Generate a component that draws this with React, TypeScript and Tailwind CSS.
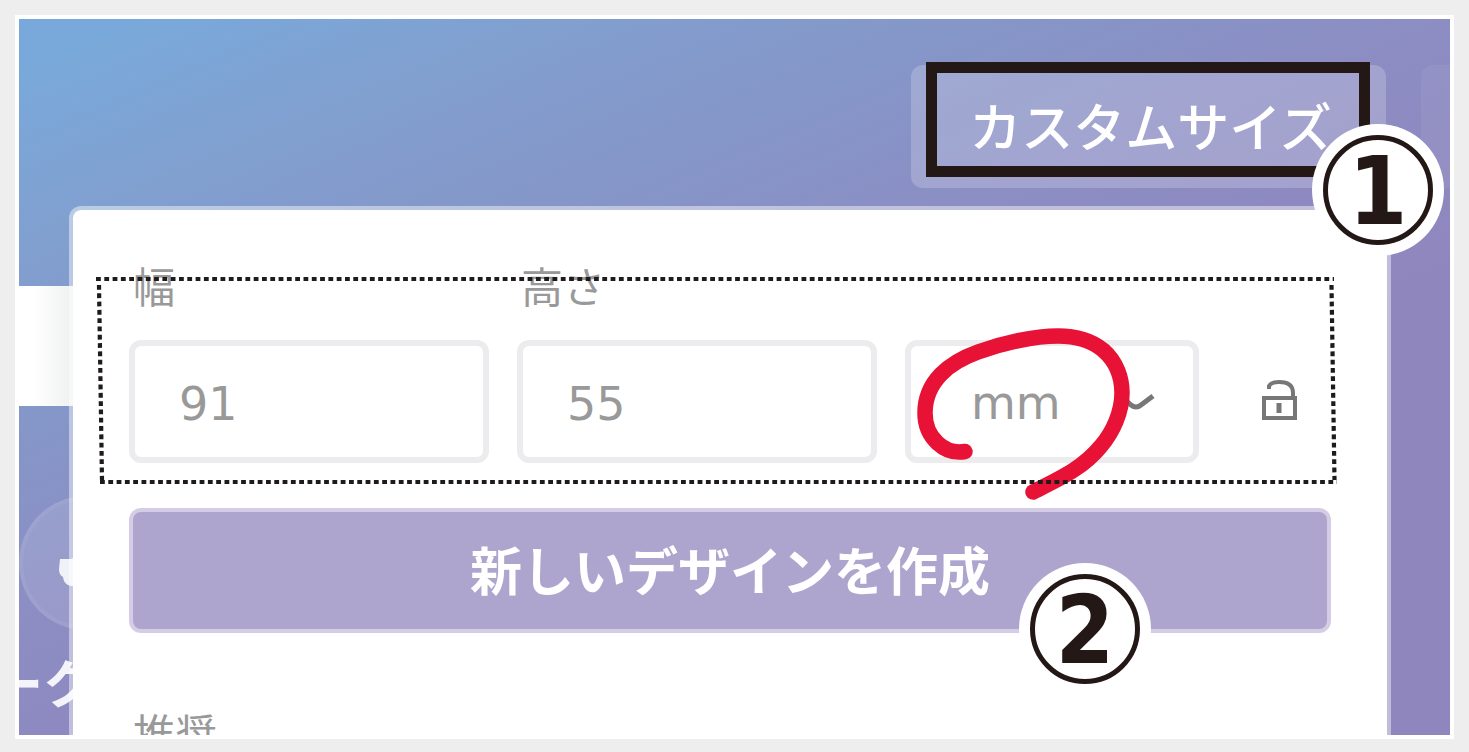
import { useState } from "react";

const fontStack = "font-['DejaVu_Sans','Noto_Sans_CJK_JP',sans-serif]";
const fieldBox =
  "h-[123px] w-full min-w-0 appearance-none rounded-xl border-[6px] border-[#ececef] bg-white pt-1 text-[46px] text-[#999] outline-none";

function StepBadge({ step }: { step: string }) {
  return (
    <span className="flex size-33 items-center justify-center rounded-full bg-white">
      <span className="flex size-[110px] items-center justify-center rounded-full border-[5px] border-[#231815] pt-1 font-['DejaVu_Sans_Condensed','DejaVu_Sans',sans-serif] text-[94px] leading-[100px] font-bold text-[#231815]">
        {step}
      </span>
    </span>
  );
}

function Backdrop() {
  return (
    <div className="absolute inset-y-0 left-0 flex w-[200px] flex-col overflow-hidden" aria-hidden="true">
      <div className="h-[267px] shrink-0" />
      <div className="h-30 shrink-0 bg-white">
        <div className="h-full w-[54px] bg-linear-to-r from-white from-25% to-[#eff1f0]" />
      </div>
      <div className="mt-[90px] flex size-[134px] shrink-0 items-center rounded-full border-4 border-white/5 bg-white/12 pl-8">
        <svg className="mt-5 h-8 w-10" viewBox="0 0 40 32">
          <path d="M5 2H16L20 0H40V29H16Q9 28 8 20Q4 18 4 12Z" fill="#f1f2f8" />
        </svg>
      </div>
      <p className="mt-6 -ml-7 text-[52px] leading-[64px] font-bold whitespace-nowrap text-white/90">
        ーク
      </p>
    </div>
  );
}

function UnlockIcon() {
  return (
    <svg className="h-11 w-10" viewBox="0 0 40 44" fill="none" stroke="#777" strokeWidth="4">
      <path d="M5 18H36V38H5Z" />
      <path d="M10 9V6Q12 2 20 2Q34 2 34 13V19" />
      <path d="M20 23V33" strokeWidth="5" />
    </svg>
  );
}

export default function App() {
  const [width, setWidth] = useState("91");
  const [height, setHeight] = useState("55");

  return (
    <div className={`flex h-screen bg-[#eee] pt-[15px] pr-[15px] pb-[13px] pl-[15px] ${fontStack}`}>
      <main className="flex min-w-0 flex-1 bg-white p-1">
        <div className="relative flex min-w-0 flex-1 flex-col overflow-hidden bg-[linear-gradient(157deg,#79a9da_4%,#819fcf_18%,#8596c8_31%,#8c8dc3_46%,#9086be_65%)]">
          <Backdrop />

          <header className="relative z-20 flex shrink-0 justify-end gap-[35px] pt-[46px]">
            <div className="relative">
              <button
                type="button"
                className="h-[123px] w-[475px] rounded-xl bg-white/20 pt-1 pl-1 text-[52px] font-medium whitespace-nowrap text-white"
              >
                カスタムサイズ
              </button>
              <div className="pointer-events-none absolute -top-[3px] left-[15px] h-[115px] w-[444px] border-[11px] border-[#231815]" />
              <div className="pointer-events-none absolute top-[59px] left-[401px]">
                <StepBadge step="1" />
              </div>
            </div>
            <div className="h-[123px] w-[29px] rounded-l-xl bg-white/5" />
          </header>

          <section className="relative z-10 mt-[18px] mr-[59px] ml-[50px] flex flex-1 flex-col rounded-t-xl border-4 border-b-0 border-white/45 bg-white bg-clip-padding px-14 pt-[55px]">
            <form className="relative" onSubmit={(e) => e.preventDefault()}>
              <div className="grid grid-cols-[360fr_360fr_294fr_104fr] gap-x-7 gap-y-[27px]">
                <label htmlFor="design-width" className="pl-1 text-[42px] leading-[48px] text-[#999]">
                  幅
                </label>
                <label
                  htmlFor="design-height"
                  className="col-span-3 pl-1 text-[42px] leading-[48px] text-[#999]"
                >
                  高さ
                </label>
                <input
                  id="design-width"
                  value={width}
                  onChange={(e) => setWidth(e.target.value)}
                  className={`${fieldBox} px-11`}
                />
                <input
                  id="design-height"
                  value={height}
                  onChange={(e) => setHeight(e.target.value)}
                  className={`${fieldBox} px-11`}
                />
                <div className="relative">
                  <select aria-label="単位" defaultValue="mm" className={`${fieldBox} pl-15`}>
                    <option>mm</option>
                    <option>px</option>
                    <option>cm</option>
                  </select>
                  <svg
                    className="pointer-events-none absolute top-[52px] right-11 h-5 w-9"
                    viewBox="0 0 36 20"
                    fill="none"
                    stroke="#777"
                    strokeWidth="5"
                  >
                    <path d="M2 4L12 13Q17 17 22 13L34 4" />
                  </svg>
                </div>
                <button
                  type="button"
                  aria-label="縦横比のロックを解除"
                  className="flex items-center justify-center"
                >
                  <UnlockIcon />
                </button>
              </div>

              <button
                type="submit"
                className="mt-[45px] h-[125px] w-full rounded-xl border-4 border-[#d5cde5] bg-[#aea5ce] pt-1 text-[52px] font-bold whitespace-nowrap text-white"
              >
                新しいデザインを作成
              </button>

              <svg
                className="pointer-events-none absolute -top-3 -left-10 h-[260px] w-[1260px]"
                viewBox="89 253 1260 260"
                fill="none"
              >
                <path
                  d="M965 451.5C945 455 925 438 925 413C925 381 950 362 978 352C1003 343 1034 336 1058 336C1079 336 1092 341 1103 350C1117 362 1122 379 1122 393C1122 412 1113 432 1101 446C1083 468 1061 478 1033 492"
                  stroke="#e71235"
                  strokeWidth="15.5"
                  strokeLinecap="round"
                  strokeLinejoin="round"
                />
                <g stroke="#1f1a1b" strokeWidth="4.2" strokeDasharray="4.8 3.5">
                  <path d="M96 279H1334" />
                  <path d="M99 285L102 480" />
                  <path d="M100 482H1337" />
                  <path d="M1331.5 285L1334.5 480" />
                </g>
              </svg>
              <div className="pointer-events-none absolute top-[298px] left-[890px]">
                <StepBadge step="2" />
              </div>
            </form>
            <h2 className="mt-[79px] pl-1 text-[42px] leading-[48px] text-[#999]">推奨</h2>
          </section>
        </div>
      </main>
    </div>
  );
}
